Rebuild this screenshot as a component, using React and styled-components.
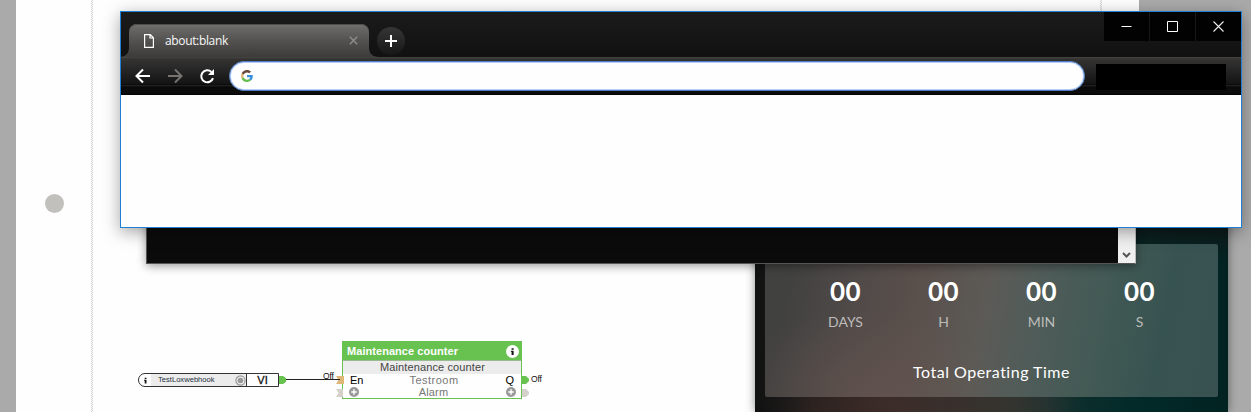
import React from 'react';
import styled, { createGlobalStyle } from 'styled-components';

const Global = createGlobalStyle`
  * { box-sizing: border-box; }
  body { margin: 0; overflow: hidden; }
`;

const Desktop = styled.main`
  position: relative;
  width: 1251px;
  height: 412px;
  overflow: hidden;
  background: #aaa;
  font-family: "Liberation Sans", sans-serif;
`;

const Sheet = styled.section`
  position: absolute;
  left: 16px;
  top: 0;
  width: 1123px;
  height: 412px;
  background: #fefefe;
`;

const Guide = styled.div`
  position: absolute;
  top: 0;
  left: ${(p) => p.$x}px;
  width: 2px;
  height: 100%;
  background: repeating-conic-gradient(#d2d2d2 0 25%, #fafafa 0 50%) 0 0 / 2px 2px;
`;

const Dot = styled.div`
  position: absolute;
  left: 29px;
  top: 194px;
  width: 19px;
  height: 19px;
  border-radius: 50%;
  background: #c1c0bc;
`;

/* Function plan nodes */
const InputNode = styled.div`
  position: absolute;
  left: 122px;
  top: 373px;
  width: 141px;
  height: 14px;
  display: flex;
  border: 1px solid #333;
  border-radius: 7px 0 0 7px;
  background: #fefefe;
`;

const NodeInfo = styled.div`
  width: 12px;
  display: grid;
  place-items: center;
`;

const NodeName = styled.div`
  flex: 1;
  display: flex;
  align-items: center;
  justify-content: space-between;
  padding: 0 0 0 7px;
  background: #ececec;
  color: #1d3040;
  font-size: 7.6px;
  line-height: 12px;
  white-space: nowrap;
`;

const NodeType = styled.div`
  width: 32px;
  border-left: 1px solid #333;
  text-align: center;
  font-size: 11px;
  line-height: 13px;
  color: #111;
  -webkit-text-stroke: 0.3px #111;
`;

const Wires = styled.svg`
  position: absolute;
  left: 244px;
  top: 365px;
`;

const PinValue = styled.span`
  position: absolute;
  left: ${(p) => p.$x}px;
  top: ${(p) => p.$y}px;
  font-size: 8.5px;
  line-height: 10px;
  letter-spacing: -0.2px;
  color: #111;
`;

const Block = styled.div`
  position: absolute;
  left: 326px;
  top: 341px;
  width: 180px;
  height: 58px;
  border: 1px solid #68c250;
  background: #fefefe;
`;

const BlockHeader = styled.div`
  height: 19px;
  display: flex;
  align-items: center;
  justify-content: space-between;
  padding: 0 2px 0 4px;
  border-bottom: 1px solid #9cb894;
  background: #68c250;
  color: #fff;
  font-size: 11px;
  font-weight: 700;
  letter-spacing: 0.05px;
`;

const BlockTitle = styled.div`
  height: 13px;
  padding-left: 1px;
  background: #ececec;
  color: #444;
  text-align: center;
  font-size: 11px;
  line-height: 13px;
  letter-spacing: 0.12px;
`;

const BlockRow = styled.div`
  height: ${(p) => p.$h}px;
  display: grid;
  grid-template-columns: 26px 1fr 26px;
  align-items: center;
  padding: 0 4px 0 ${(p) => p.$left}px;
  font-size: 11px;
  line-height: ${(p) => p.$h}px;
  color: #000;
`;

const RowLabel = styled.span`
  padding-left: 1px;
  text-align: center;
  color: #777;
  letter-spacing: ${(p) => p.$spacing}px;
`;

const RowEnd = styled.span`
  display: flex;
  justify-content: flex-end;
  padding-right: ${(p) => p.$right}px;
`;

const RowStart = styled.span`
  display: flex;
`;

/* Timer app window */
const TimerWindow = styled.section`
  position: absolute;
  left: 755px;
  top: 200px;
  width: 473px;
  height: 212px;
  padding: 44px 10px 15px;
  background:
    linear-gradient(180deg, rgba(20, 22, 22, .8) 10%, rgba(20, 22, 22, 0) 30%),
    linear-gradient(90deg, #101111 0%, #1d1b1a 7%, #2c2220 12%, #3c2c29 27%, #38302d 43%, #34342f 54%, #253330 62%, #0c2e2c 69%, #022a29 80%, #022322 100%);
  box-shadow: 0 0 9px rgba(0, 0, 0, .45);
`;

const TimerCard = styled.div`
  height: 153px;
  display: flex;
  flex-direction: column;
  align-items: center;
  padding-top: 29px;
  border-radius: 2px;
  background:
    radial-gradient(ellipse 130px 85px at 22% 98%, rgba(107, 86, 80, .5), transparent),
    linear-gradient(100deg, #414140 6%, #504a48 21%, #5a504c 34%, #5c5a56 48%, #515c59 58%, #435a55 72%, #375351 86%, #395251 100%);
  font-family: Lato, sans-serif;
`;

const Units = styled.div`
  display: grid;
  grid-template-columns: repeat(4, 98px);
  margin-left: 2px;
`;

const Unit = styled.div`
  display: flex;
  flex-direction: column;
  align-items: center;
`;

const UnitValue = styled.strong`
  font-size: 26px;
  font-weight: 700;
  line-height: 36px;
  color: #fff;
  letter-spacing: 0.5px;
`;

const UnitName = styled.span`
  margin-top: 3px;
  font-size: 14px;
  line-height: 20px;
  color: #bdbcba;
`;

const TimerCaption = styled.div`
  margin-top: 28px;
  font-size: 16px;
  line-height: 24px;
  letter-spacing: 0.5px;
  color: #fff;
`;

/* Console window */
const Console = styled.section`
  position: absolute;
  left: 146px;
  top: 190px;
  width: 990px;
  height: 74px;
  display: flex;
  justify-content: flex-end;
  border: 1px solid #555;
  border-right-color: #bbb;
  background: #0b0b0b;
  box-shadow: 0 2px 9px rgba(0, 0, 0, .4);
`;

const Scrollbar = styled.div`
  width: 17px;
  display: flex;
  align-items: flex-end;
  justify-content: center;
  padding-bottom: 4px;
  background: #f0f0f0;
`;

/* Browser window */
const Browser = styled.section`
  position: absolute;
  left: 120px;
  top: 11px;
  width: 1122px;
  height: 217px;
  display: flex;
  flex-direction: column;
  border: 1px solid #1d80d3;
  background: #fefefe;
  box-shadow: 0 4px 16px rgba(0, 0, 0, .36);
`;

const TitleBar = styled.div`
  height: 45px;
  display: flex;
  align-items: flex-end;
  background: linear-gradient(#1b1b1b, #111);
`;

const Tab = styled.div`
  position: relative;
  width: 240px;
  height: 33px;
  margin-left: 8px;
  display: flex;
  align-items: center;
  padding: 0 11px 0 15px;
  border-radius: 8px 8px 0 0;
  background: linear-gradient(#757372 0, #696766 12%, #51504f 55%, #3d3b3a 100%);
  box-shadow: inset 0 1px #4e4d4c;

  &::before, &::after {
    content: "";
    position: absolute;
    bottom: 0;
    width: 8px;
    height: 8px;
  }
  &::before { left: -8px; background: radial-gradient(circle at 0 0, transparent 7.3px, #403e3d 8px); }
  &::after { right: -8px; background: radial-gradient(circle at 100% 0, transparent 7.3px, #403e3d 8px); }
`;

const TabTitle = styled.span`
  flex: 1;
  padding-left: 11px;
  font-family: "Open Sans", sans-serif;
  font-size: 12px;
  line-height: 16px;
  letter-spacing: -0.35px;
  color: #f8f8f8;
`;

const NewTab = styled.div`
  width: 28px;
  height: 28px;
  margin: 0 0 2px 8px;
  display: grid;
  place-items: center;
  border-radius: 50%;
  background: linear-gradient(#363636, #171717);
`;

const WindowButtons = styled.div`
  align-self: flex-start;
  margin-left: auto;
  display: grid;
  grid-template-columns: 45px 45px 45px;
  gap: 1px;
  background: #171717;
`;

const WindowButton = styled.div`
  height: 29px;
  display: grid;
  place-items: center;
  background: #020202;
`;

const Toolbar = styled.div`
  height: 38px;
  display: flex;
  align-items: center;
  padding: 0 15px 0 13px;
  background: linear-gradient(#484645 0, #343332 2px, #2b2b2b 9px, #202020 17px, #141414 27px, #050505 28px, #222 28px, #1b1b1b 29px, #090909 30px, #0d0d0d 36px, #020202 38px);
`;

const Nav = styled.div`
  width: 95px;
  display: flex;
  gap: 14px;
`;

const Omnibox = styled.div`
  width: 856px;
  height: 30px;
  display: flex;
  align-items: center;
  padding-left: 11px;
  border: 1px solid #4f7cc4;
  border-radius: 15px;
  background: #fefefe;
  box-shadow: inset 0 0 0 1px #b4cdf8;
`;

const Extensions = styled.div`
  width: 130px;
  height: 26px;
  margin: 2px 0 0 11px;
  background: #000;
`;

const InfoGlyph = ({ size, r }) => (
  <svg width={size} height={size} viewBox="0 0 14 14">
    {r && <circle cx="7" cy="7" r={r} fill="#fff" />}
    <path d="M6 3.4h2.2v1.8H6zM5.2 6.2h3v4.6H6V7.3h-.8z" fill="#111" />
  </svg>
);

const PlusGlyph = () => (
  <svg width="10" height="10" viewBox="0 0 10 10">
    <circle cx="5" cy="5" r="5" fill="#999" />
    <path d="M5 2.3v5.4M2.3 5h5.4" stroke="#fff" strokeWidth="1.4" />
  </svg>
);

const GoogleMark = () => (
  <svg width="12" height="12" viewBox="0 0 48 48">
    <path fill="#684838" d="M24 9.5c3.5 0 6.7 1.2 9.2 3.6l6.9-6.9C35.9 2.4 30.5 0 24 0 14.6 0 6.5 5.4 2.6 13.2l8 6.2C12.4 13.7 17.7 9.5 24 9.5z" />
    <path fill="#388fdc" d="M47 24.6c0-1.6-.2-3.1-.4-4.6H24v9h12.9c-.6 3-2.2 5.5-4.7 7.2l7.7 6C44.4 38 47 31.8 47 24.6z" />
    <path fill="#dfb978" d="M10.5 28.6A14.5 14.5 0 0 1 10.5 19.4l-8-6.2a24 24 0 0 0 0 21.6z" />
    <path fill="#61bd4b" d="M24 48c6.5 0 11.9-2.1 15.9-5.8l-7.7-6c-2.2 1.5-4.9 2.3-8.2 2.3-6.3 0-11.6-4.2-13.5-9.9l-8 6.2C6.5 42.6 14.6 48 24 48z" />
  </svg>
);

const UNITS = ['DAYS', 'H', 'MIN', 'S'];

export default function App() {
  return (
    <Desktop>
      <Global />
      <Sheet>
        <Guide $x={75} />
        <Guide $x={1084} />
        <Dot />
        <InputNode>
          <NodeInfo><InfoGlyph size={11} /></NodeInfo>
          <NodeName>
            TestLoxwebhook
            <svg width="11" height="11" viewBox="0 0 11 11">
              <circle cx="5.5" cy="5.5" r="4.6" fill="none" stroke="#999" strokeWidth="1.2" />
              <circle cx="5.5" cy="5.5" r="2.8" fill="#999" />
            </svg>
          </NodeName>
          <NodeType>VI</NodeType>
        </InputNode>
        <PinValue $x={307} $y={371}>Off</PinValue>
        <PinValue $x={515} $y={374}>Off</PinValue>
        <Block>
          <BlockHeader>Maintenance counter<InfoGlyph size={13} r={7} /></BlockHeader>
          <BlockTitle>Maintenance counter</BlockTitle>
          <BlockRow $h={13} $left={7}>
            <RowStart>En</RowStart>
            <RowLabel $spacing={0.5}>Testroom</RowLabel>
            <RowEnd $right={3}>Q</RowEnd>
          </BlockRow>
          <BlockRow $h={10} $left={6}>
            <RowStart><PlusGlyph /></RowStart>
            <RowLabel $spacing={0.2}>Alarm</RowLabel>
            <RowEnd $right={1}><PlusGlyph /></RowEnd>
          </BlockRow>
        </Block>
        <Wires width="280" height="40" viewBox="0 0 280 40">
          <path d="M19 11h4l3 2v4l-3 2h-4z" fill="#68c250" />
          <path d="M76 11h8v8h-8l2.5-4z" fill="#e0b777" />
          <path d="M26 14.5h54" stroke="#222" />
          <path d="M76 24h7v8h-7l2.5-4z" fill="#d4d0ca" />
          <path d="M262 11h4l3 3v2l-3 3h-4z" fill="#68c250" />
          <path d="M262 24h4l3 3v2l-3 3h-4z" fill="#d4d0ca" />
        </Wires>
      </Sheet>

      <TimerWindow>
        <TimerCard>
          <Units>
            {UNITS.map((name) => (
              <Unit key={name}>
                <UnitValue>00</UnitValue>
                <UnitName>{name}</UnitName>
              </Unit>
            ))}
          </Units>
          <TimerCaption>Total Operating Time</TimerCaption>
        </TimerCard>
      </TimerWindow>

      <Console>
        <Scrollbar>
          <svg width="9" height="7" viewBox="0 0 9 7">
            <path d="M1 1l3.5 3.5L8 1" fill="none" stroke="#555" strokeWidth="2" />
          </svg>
        </Scrollbar>
      </Console>

      <Browser>
        <TitleBar>
          <Tab>
            <svg width="10" height="14" viewBox="0 0 10 14">
              <path d="M.6.6h5.7l3.1 3.2v9.6H.6zM6 .8V4h3.2" fill="none" stroke="#fff" strokeWidth="1.2" />
            </svg>
            <TabTitle>about:blank</TabTitle>
            <svg width="9" height="9" viewBox="0 0 9 9">
              <path d="M.8.8l7.4 7.4M8.2.8L.8 8.2" stroke="#918f8e" strokeWidth="1.3" />
            </svg>
          </Tab>
          <NewTab>
            <svg width="12" height="12" viewBox="0 0 12 12">
              <path d="M6 0v12M0 6h12" stroke="#fff" strokeWidth="2" />
            </svg>
          </NewTab>
          <WindowButtons>
            <WindowButton>
              <svg width="11" height="11"><path d="M.5 5.5h10" stroke="#fff" /></svg>
            </WindowButton>
            <WindowButton>
              <svg width="11" height="11"><path d="M.5.5h10v10H.5z" fill="none" stroke="#fff" /></svg>
            </WindowButton>
            <WindowButton>
              <svg width="11" height="11"><path d="M.5.5l10 10M10.5.5l-10 10" stroke="#eee" strokeWidth="1.1" /></svg>
            </WindowButton>
          </WindowButtons>
        </TitleBar>
        <Toolbar>
          <Nav>
            <svg width="18" height="18" viewBox="0 0 18 18">
              <path d="M16 9H3M9 2.5L2.5 9 9 15.5" fill="none" stroke="#fff" strokeWidth="2" />
            </svg>
            <svg width="18" height="18" viewBox="0 0 18 18">
              <path d="M2 9h13M9 2.5L15.5 9 9 15.5" fill="none" stroke="#777371" strokeWidth="2" />
            </svg>
            <svg width="18" height="18" viewBox="0 0 18 18">
              <path d="M15 11.1A6 6 0 1 1 13.4 4.9" fill="none" stroke="#fff" strokeWidth="2" />
              <path d="M16 2v6h-6z" fill="#fff" />
            </svg>
          </Nav>
          <Omnibox><GoogleMark /></Omnibox>
          <Extensions />
        </Toolbar>
      </Browser>
    </Desktop>
  );
}
